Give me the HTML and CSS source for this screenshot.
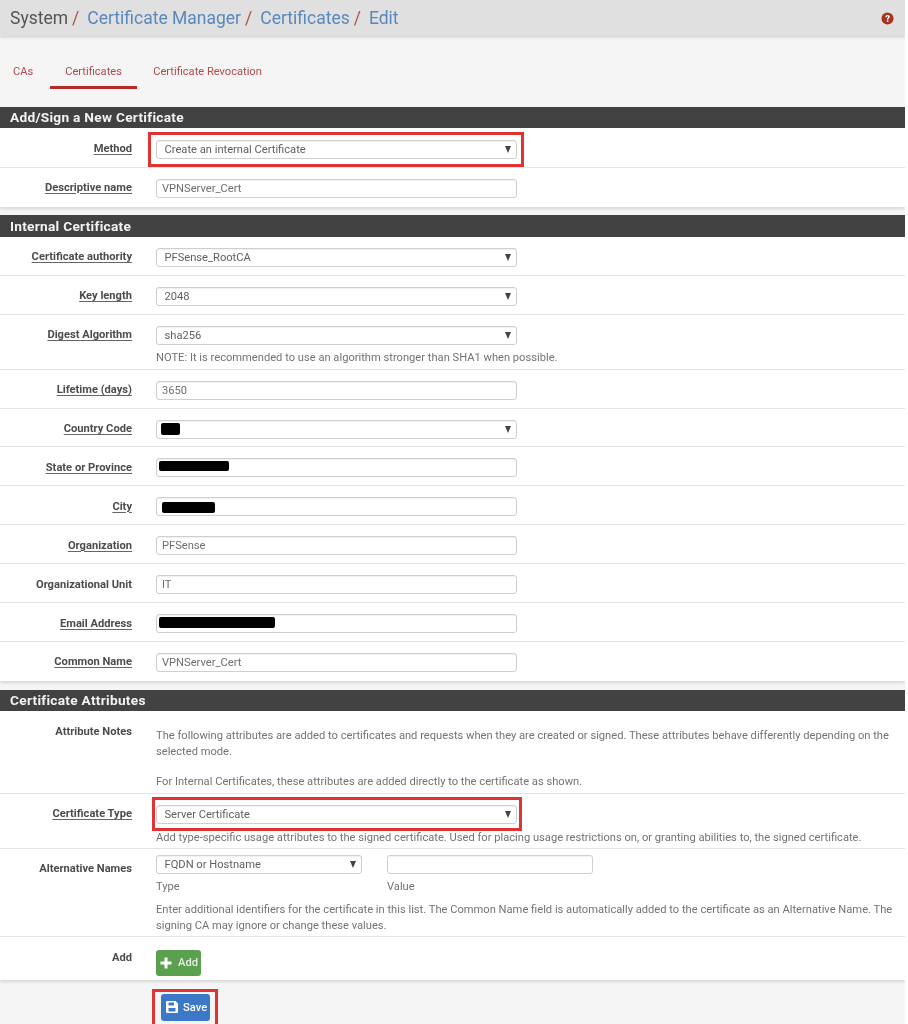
FILE: index.html
```html
<!DOCTYPE html>
<html lang="en">
<head>
<meta charset="utf-8">
<title>System / Certificate Manager / Certificates / Edit</title>
<link rel="stylesheet" href="styles.css">
</head>
<body>
<div class="page">
  <header class="crumbs">
    <span class="crumb-root">System</span><span class="sep sep-first">/</span>
    <a class="crumb">Certificate Manager</a><span class="sep">/</span>
    <a class="crumb">Certificates</a><span class="sep">/</span>
    <a class="crumb">Edit</a>
    <svg class="help" viewBox="0 0 14 14" aria-hidden="true"><circle cx="7" cy="7" r="6.5" fill="#a8321f"/><path d="M4.6 5.4C4.8 3.9 5.8 3.2 7.1 3.2 8.5 3.2 9.5 4 9.5 5.2 9.5 6.6 7.8 6.8 7.8 8.2H6.2C6.2 6.2 7.7 6.1 7.7 5.3 7.7 4.9 7.4 4.7 7 4.7 6.6 4.7 6.3 5 6.2 5.6Z" fill="#fff"/><rect x="6.2" y="9" width="1.7" height="1.7" fill="#fff"/></svg>
  </header>

  <nav class="tabs">
    <a class="tab tab-first">CAs</a>
    <a class="tab tab-active">Certificates</a>
    <a class="tab">Certificate Revocation</a>
  </nav>

  <section class="panel panel-first">
    <h2 class="bar">Add/Sign a New Certificate</h2>
    <div class="row row-method">
      <label class="lbl link">Method</label>
      <div class="ctl">
        <div class="field select">Create an internal Certificate</div>
        <div class="mark mark-method"></div>
      </div>
    </div>
    <div class="row row-last">
      <label class="lbl link">Descriptive name</label>
      <div class="ctl"><div class="field">VPNServer_Cert</div></div>
    </div>
  </section>

  <section class="panel panel-internal">
    <h2 class="bar bar-tall">Internal Certificate</h2>
    <div class="row">
      <label class="lbl link">Certificate authority</label>
      <div class="ctl"><div class="field select">PFSense_RootCA</div></div>
    </div>
    <div class="row">
      <label class="lbl link">Key length</label>
      <div class="ctl"><div class="field select">2048</div></div>
    </div>
    <div class="row row-digest">
      <label class="lbl link">Digest Algorithm</label>
      <div class="ctl">
        <div class="field select">sha256</div>
        <p class="hint">NOTE: It is recommended to use an algorithm stronger than SHA1 when possible.</p>
      </div>
    </div>
    <div class="row">
      <label class="lbl link">Lifetime (days)</label>
      <div class="ctl"><div class="field">3650</div></div>
    </div>
    <div class="row">
      <label class="lbl link">Country Code</label>
      <div class="ctl"><div class="field select"></div><div class="redact redact-country"></div></div>
    </div>
    <div class="row">
      <label class="lbl link">State or Province</label>
      <div class="ctl"><div class="field"></div><div class="redact redact-state"></div></div>
    </div>
    <div class="row">
      <label class="lbl link">City</label>
      <div class="ctl"><div class="field"></div><div class="redact redact-city"></div></div>
    </div>
    <div class="row">
      <label class="lbl link">Organization</label>
      <div class="ctl"><div class="field">PFSense</div></div>
    </div>
    <div class="row">
      <label class="lbl">Organizational Unit</label>
      <div class="ctl"><div class="field">IT</div></div>
    </div>
    <div class="row">
      <label class="lbl link">Email Address</label>
      <div class="ctl"><div class="field"></div><div class="redact redact-email"></div></div>
    </div>
    <div class="row row-last">
      <label class="lbl link">Common Name</label>
      <div class="ctl"><div class="field">VPNServer_Cert</div></div>
    </div>
  </section>

  <section class="panel panel-attrs">
    <h2 class="bar">Certificate Attributes</h2>
    <div class="row row-notes">
      <label class="lbl">Attribute Notes</label>
      <div class="ctl notes">
        <p>The following attributes are added to certificates and requests when they are created or signed. These attributes behave differently depending on the selected mode.</p>
        <p>For Internal Certificates, these attributes are added directly to the certificate as shown.</p>
      </div>
    </div>
    <div class="row row-type">
      <label class="lbl link">Certificate Type</label>
      <div class="ctl">
        <div class="field select">Server Certificate</div>
        <div class="mark mark-type"></div>
        <p class="hint">Add type-specific usage attributes to the signed certificate. Used for placing usage restrictions on, or granting abilities to, the signed certificate.</p>
      </div>
    </div>
    <div class="row row-alt">
      <label class="lbl">Alternative Names</label>
      <div class="ctl">
        <div class="pair">
          <div class="pair-col">
            <div class="field select">FQDN or Hostname</div>
            <span class="cap">Type</span>
          </div>
          <div class="pair-col">
            <div class="field"></div>
            <span class="cap">Value</span>
          </div>
        </div>
        <p class="hint hint-wide">Enter additional identifiers for the certificate in this list. The Common Name field is automatically added to the certificate as an Alternative Name. The signing CA may ignore or change these values.</p>
      </div>
    </div>
    <div class="row row-add row-last">
      <label class="lbl">Add</label>
      <div class="ctl">
        <a class="btn btn-add">
          <svg class="btn-ico" viewBox="0 0 12 12" aria-hidden="true"><path d="M4.5 0.5H7.5V4.5H11.5V7.5H7.5V11.5H4.5V7.5H0.5V4.5H4.5Z" fill="#fff"/></svg>Add
        </a>
      </div>
    </div>
  </section>

  <div class="actions">
    <a class="btn btn-save">
      <svg class="btn-ico" viewBox="0 0 14 14" aria-hidden="true"><path fill-rule="evenodd" d="M2 1H10.5L13 3.5V12A1 1 0 0 1 12 13H2A1 1 0 0 1 1 12V2A1 1 0 0 1 2 1ZM3.5 2.5V5.5H9V2.5ZM3.5 8V11.5H10.5V8Z" fill="#fff"/></svg>Save
    </a>
    <div class="mark mark-save"></div>
  </div>
</div>
</body>
</html>
```

FILE: styles.css
```css
* { box-sizing: border-box; }
html, body { margin: 0; height: 1024px; overflow: hidden; background: #fff; }
body { font-family: Roboto, "Liberation Sans", sans-serif; font-size: 11.15px; color: #6b6b6b; }
p { margin: 0; }

.page { width: 905px; height: 1024px; background: #f5f5f5; filter: blur(0.5px); overflow: hidden; }

.crumbs {
  height: 36px; background: #e0e0e0; box-shadow: 0 1px 3px rgba(0,0,0,.18);
  display: flex; align-items: center; padding: 0 10px; font-size: 17.5px; position: relative;
}
.crumb-root { color: #555; }
.crumb { color: #5a88bd; }
.sep { color: #a9544c; margin: 0 8px 0 4px; }
.sep-first { margin-left: 4px; margin-right: 8px; }
.help { width: 13px; height: 13px; margin-left: auto; margin-right: 1px; }

.tabs { display: flex; height: 71px; padding-top: 30px; padding-left: 50px; align-items: flex-start; }
.tab {
  color: #b14a4c; padding: 0 16px; height: 24px; line-height: 11px; font-size: 11.1px; white-space: nowrap;
}
.tab-first { padding: 0; margin-left: -37px; margin-right: 17px; }
.tab-active { border-bottom: 3px solid #b62a2a; height: 23px; width: 87px; padding: 0 15px; }

.panel { background: #fff; box-shadow: 0 2px 3px rgba(0,0,0,.12); margin-bottom: 8px; }
.panel-internal { margin-bottom: 9px; }
.panel-attrs { margin-bottom: 14px; }
.bar {
  margin: 0; height: 21px; background: #424242; color: #f2f2f2; font-size: 13.7px; font-weight: 700;
  line-height: 20px; padding-left: 10px; letter-spacing: .27px;
}
.bar-tall { height: 22px; line-height: 22px; }

.row {
  display: grid; grid-template-columns: 132px 745px; column-gap: 24px;
  height: 38.9px; padding-top: 11px; border-bottom: 1px solid #e4e4e4; background: #fff;
}
.row-method { height: 40px; padding-top: 12px; }
.row-digest { height: 55px; }
.row-notes { height: 83px; padding-top: 12px; }
.row-type { height: 55px; padding-top: 11px; }
.row-alt { height: 88px; padding-top: 6px; }
.row-add { height: 43px; padding-top: 13px; }
.row-last { border-bottom: 0; }

.lbl { color: #4c4c4c; font-weight: 700; text-align: right; line-height: 12px; white-space: nowrap; margin-top: 2.5px; }
.link { text-decoration: underline; text-underline-offset: 2px; text-decoration-color: #666; }
.panel-internal .lbl, .row-notes .lbl, .row-type .lbl { margin-top: 3.5px; }
.row-alt .lbl { margin-top: 8px; }
.row-add .lbl { margin-top: 2px; }

.ctl { position: relative; }
.field {
  width: 361px; height: 19px; background: #fff; border: 1px solid #cfcfcf; border-radius: 3px;
  box-shadow: inset 0 1px 1px rgba(0,0,0,.06); line-height: 18px; padding-left: 5px; position: relative;
  color: #6f6f6f; white-space: nowrap;
}
.select { padding-left: 7.5px; color: #5f5f5f; }
.select::after {
  content: ""; position: absolute; right: 5px; top: 5px;
  border-left: 3.5px solid transparent; border-right: 3.5px solid transparent; border-top: 7px solid #444;
}

.hint { margin-top: 5px; line-height: 15px; color: #737373; white-space: nowrap; }
.hint-wide { margin-top: 9px; line-height: 16px; white-space: normal; width: 740px; }
.row-type .hint { margin-top: 6px; }

.notes { padding-top: 5px; color: #737373; line-height: 16px; width: 733px; }
.notes p + p { margin-top: 14px; }

.pair { display: flex; gap: 25px; }
.pair-col { width: 206px; }
.pair-col .field { width: 100%; }
.cap { display: block; margin-top: 7px; line-height: 12px; color: #737373; }

.btn {
  display: inline-flex; align-items: center; gap: 3px; color: #fff; border-radius: 3px; font-weight: 500;
}
.btn-ico { width: 12px; height: 12px; flex: none; }
.btn-add { width: 45px; height: 26px; background: #5aa04f; padding-left: 4px; gap: 6px; color: #e6f1e2; }
.btn-save { width: 49px; height: 27px; background: #3c78c8; padding-left: 4px; gap: 4px; }
.btn-save .btn-ico { width: 14px; height: 14px; }

.actions { position: relative; padding-left: 161px; }

.mark { position: absolute; border: 3px solid #e03434; pointer-events: none; }
.mark-method { left: -8px; top: -8px; width: 376px; height: 35px; }
.mark-type { left: -4px; top: -8px; width: 370px; height: 34px; }
.mark-save { left: 152px; top: -5px; width: 66px; height: 40px; }

.redact { position: absolute; background: #000; border-radius: 2px; }
.redact-country { left: 5px; top: 3px; width: 19px; height: 12px; }
.redact-state { left: 3px; top: 3px; width: 70px; height: 10px; }
.redact-city { left: 6px; top: 5px; width: 53px; height: 11px; }
.redact-email { left: 3px; top: 3px; width: 116px; height: 11px; }
```
